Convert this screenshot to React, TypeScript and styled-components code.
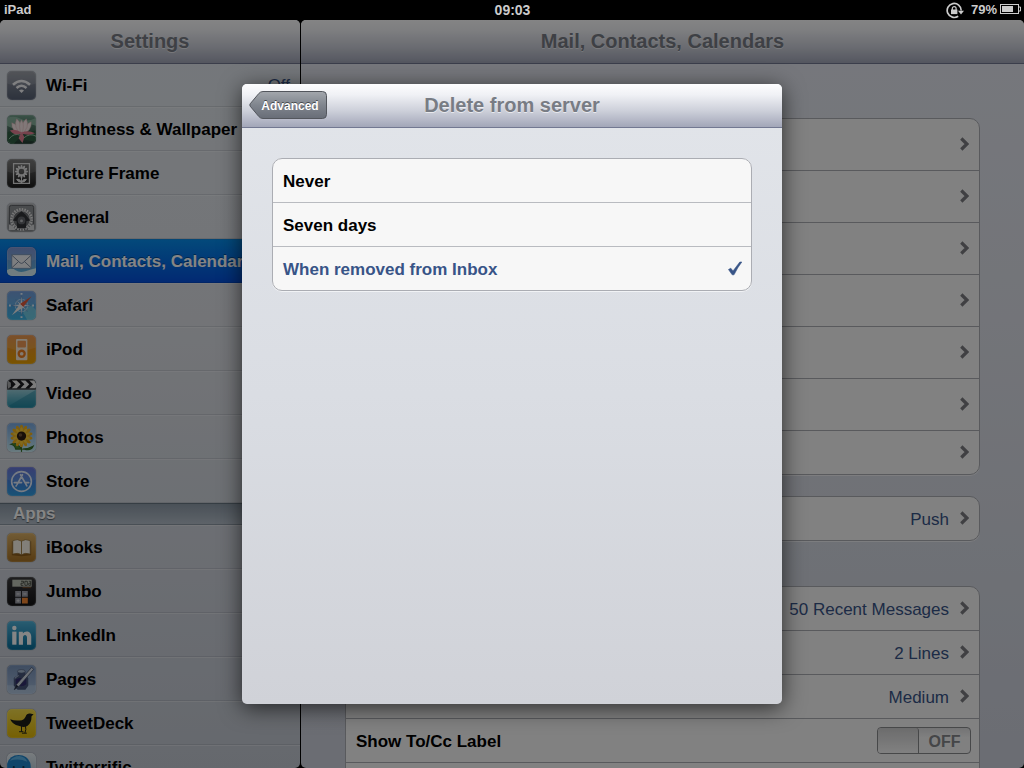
import React, { useState } from "react";
import styled, { createGlobalStyle, css } from "styled-components";

const GlobalStyle = createGlobalStyle`
  *, *::before, *::after { box-sizing: border-box; }
  html, body { margin: 0; padding: 0; background: #000; }
  body { font-family: "Liberation Sans", Arial, sans-serif; font-size: 17px; overflow: hidden; }
  ul { list-style: none; margin: 0; padding: 0; }
  h1, h2, h3 { margin: 0; font-size: 20px; font-weight: bold; }
`;

const Screen = styled.div`
  display: flex;
  flex-direction: column;
  height: 100vh;
  background: #000;
`;

const StatusBar = styled.header`
  flex: none;
  display: grid;
  grid-template-columns: 1fr auto 1fr;
  align-items: center;
  height: 20px;
  padding: 0 3px 0 4px;
  color: #cbcbcb;
  font-size: 14px;
  font-weight: bold;
  line-height: 18px;
`;

const Carrier = styled.span`
  font-size: 13px;
`;

const StatusIcons = styled.div`
  display: flex;
  justify-content: flex-end;
  align-items: center;
  gap: 3px;
  font-size: 13px;

  svg:first-child { margin-right: 4px; }
  svg:last-child { margin-bottom: 2px; }
`;

const Split = styled.div`
  position: relative;
  flex: 1;
  min-height: 0;
  display: grid;
  grid-template-columns: 300px 1fr;
  gap: 1px;
`;

const panel = css`
  display: flex;
  flex-direction: column;
  min-width: 0;
  min-height: 0;
  overflow: hidden;
  border-radius: 5px;
`;

const Sidebar = styled.nav`
  ${panel}
  background: linear-gradient(#e0e6ec, #dcdfe5 40%, #c2c8d2);
`;

const Detail = styled.main`
  ${panel}
  background: linear-gradient(#e3e6ee, #dcdfe8 40%, #cdd1dc);
`;

const TitleBar = styled.div`
  position: relative;
  z-index: 1;
  flex: none;
  display: flex;
  align-items: center;
  justify-content: center;
  height: 44px;
  margin-bottom: -1px;
  padding-bottom: 2px;
  border-bottom: 1px solid #727891;
  background: linear-gradient(#fdfdfe, #f0f1f5 25%, #cdd0da 62%, #a2a6b8);
  color: #787c84;
  text-shadow: 0 1px 0 rgba(255, 255, 255, 0.6);

  h1, h2 { padding-top: 2px; }
`;

const Label = styled.span`
  padding-top: 2px;
`;

const SidebarLink = styled.a<{ $active?: boolean }>`
  display: flex;
  align-items: center;
  gap: 10px;
  height: 44px;
  padding: 0 10px 0 7px;
  border-top: 1px solid ${(p) => (p.$active ? "#0e86dc" : "rgba(255,255,255,.3)")};
  border-bottom: 1px solid ${(p) => (p.$active ? "#0348c4" : "rgba(120,126,136,.22)")};
  background: ${(p) => (p.$active ? "linear-gradient(#068ceb, #0450dc)" : "none")};
  color: ${(p) => (p.$active ? "#fff" : "#000")};
  text-shadow: ${(p) => (p.$active ? "0 -1px 0 rgba(0,0,0,.35)" : "none")};
  font-weight: bold;
  text-decoration: none;
  white-space: nowrap;
`;

const SidebarValue = styled(Label)`
  margin-left: auto;
  color: #385487;
  font-weight: normal;
`;

const IconFrame = styled.svg`
  flex: none;
  width: 29px;
  height: 29px;
  border-radius: 5px;
  box-shadow: 0 0 1px rgba(30, 40, 55, 0.7);
`;

const SectionBar = styled.h2`
  height: 22px;
  padding-left: 13px;
  border-top: 1px solid #687782;
  border-bottom: 1px solid #8d98a3;
  background: linear-gradient(#8e9ba8, #b4bec9);
  color: #fff;
  font-size: 17px;
  line-height: 20px;
  text-shadow: 0 1px 1px rgba(0, 0, 0, 0.5);
`;

const Groups = styled.div`
  flex: 1;
  min-height: 0;
  padding: 55px 44px 0;
`;

const card = css`
  border: 1px solid #abadb3;
  border-radius: 10px;
  background: #f7f7f7;
  box-shadow: 0 1px 0 rgba(255, 255, 255, 0.6);
`;

const Card = styled.ul<{ $gap: number }>`
  ${card}
  margin-bottom: ${(p) => p.$gap}px;
`;

const Row = styled.li<{ $tall?: boolean }>`
  display: flex;
  height: ${(p) => (p.$tall ? 52 : 44)}px;
  border-bottom: 1px solid #abadb3;
  font-weight: bold;

  &:last-child { border-bottom: 0; height: 43px; }
`;

const RowLink = styled.a`
  flex: 1;
  display: flex;
  align-items: center;
  justify-content: flex-end;
  gap: 11px;
  padding: 0 10px;
  color: #385487;
  font-weight: normal;
  text-decoration: none;

  svg { margin-bottom: 2px; }
`;

const SwitchLabel = styled.label`
  flex: 1;
  display: flex;
  align-items: center;
  justify-content: space-between;
  padding: 0 8px 0 10px;
`;

const Switch = styled.span`
  display: grid;
  grid-template-columns: 41px 1fr;
  width: 94px;
  height: 27px;
  border: 1px solid #898a8d;
  border-radius: 4px;
  background: linear-gradient(#dedee0, #f6f6f6 40%);
  color: #85868a;
  font-size: 16px;
  line-height: 27px;
  text-align: center;
  overflow: hidden;
`;

const Knob = styled.input`
  appearance: none;
  margin: 0;
  border-right: 1px solid #898a8d;
  border-radius: 3px;
  background: linear-gradient(#cfcfd0, #fafafa);
`;

const Overlay = styled.div`
  position: absolute;
  z-index: 2;
  inset: 0;
  display: grid;
  place-items: center;
  background: rgba(0, 0, 0, 0.48);
`;

const Dialog = styled.section`
  display: flex;
  flex-direction: column;
  width: 540px;
  max-width: 100%;
  height: 620px;
  max-height: 100%;
  overflow: hidden;
  border-radius: 5px;
  background: linear-gradient(#e2e5ea, #dadde3 50%, #d0d2d8);
  box-shadow: 0 4px 22px rgba(0, 0, 0, 0.65);
`;

const DialogBar = styled(TitleBar)`
  display: grid;
  grid-template-columns: 78px 1fr 78px;
  margin-bottom: 0;
  padding: 0 7px 2px;
  text-align: center;
`;

const BackButton = styled.button`
  position: relative;
  width: 78px;
  height: 28px;
  padding: 2px 0 0 4px;
  border: 0;
  background: none;
  color: #fff;
  font: bold 12px "Liberation Sans", Arial, sans-serif;
  text-shadow: 0 -1px 0 rgba(0, 0, 0, 0.5);

  svg { position: absolute; inset: 0; }
  span { position: relative; }
`;

const Choices = styled.fieldset`
  ${card}
  margin: 30px;
  padding: 0;
  min-width: 0;
`;

const Choice = styled.label<{ $on: boolean }>`
  display: flex;
  align-items: center;
  justify-content: space-between;
  height: 44px;
  padding: 0 8px 0 10px;
  border-bottom: 1px solid #b9bbc0;
  color: ${(p) => (p.$on ? "#385487" : "#000")};
  font-weight: bold;

  &:last-child { border-bottom: 0; height: 43px; }
`;

const HiddenRadio = styled.input`
  position: absolute;
  appearance: none;
  margin: 0;
`;

const Chevron = () => (
  <svg width="9" height="14" viewBox="0 0 9 14" aria-hidden="true">
    <path d="M1.3 1.5 6.9 7 1.3 12.5" fill="none" stroke="#7b7c80" strokeWidth="3.2" />
  </svg>
);

type Art = { top: string; bottom: string; gloss?: boolean; art: React.ReactNode };

const petals = (n: number, y: number, rx: number, ry: number, fill: string, cx = 15, cy = 15) =>
  Array.from({ length: n }, (_, i) => (
    <ellipse key={i} cx={cx} cy={cy - y} rx={rx} ry={ry} fill={fill} transform={`rotate(${(360 / n) * i} ${cx} ${cy})`} />
  ));

const icons: Record<string, Art> = {
  wifi: {
    top: "#90949d", bottom: "#566074", gloss: true,
    art: (
      <g fill="none" stroke="#f4f4f6" strokeWidth="2.6">
        <path d="M6.2 14.2Q15 6.4 23.8 14.2M9.8 17.6Q15 13 20.2 17.6" />
        <path d="M12.4 20.2Q15 18 17.6 20.2L15 22.8Z" fill="#f4f4f6" stroke="none" />
      </g>
    ),
  },
  lotus: {
    top: "#6f9c88", bottom: "#20392f",
    art: (
      <g>
        <path d="M0 3Q8 0 14 4T30 3V11Q22 8 15 12T0 11Z" fill="#91b9a5" opacity=".8" />
        <path d="M0 18 9 15 14 22 7 30H0ZM30 16 20 18 17 25 30 28Z" fill="#2f5d42" />
        <path d="M2 25Q7 18 14 21M17 24Q24 18 30 22" stroke="#9bc6aa" fill="none" />
        <g fill="#f7e7e6" stroke="#dfb2b8" strokeWidth=".5">
          <path d="M15 20Q4 17 5 8Q12 10 15 20ZM15 20Q26 17 25 7Q18 10 15 20Z" />
          <path d="M15 20Q6 13 10 4Q16 9 15 20ZM15 20Q24 13 20 4Q14 9 15 20Z" />
          <path d="M15 20Q11 11 15 5Q19 11 15 20Z" />
        </g>
        <path d="M15 18Q9 14 3 16Q8 22 15 19ZM15 18Q22 15 29 19Q22 22 15 19ZM15 17 18 23 16 29 12 24Z" fill="#e27f92" />
      </g>
    ),
  },
  frame: {
    top: "#6b6b6b", bottom: "#1c1c1c", gloss: true,
    art: (
      <g>
        <path d="M6.8 4.8H23.2V25.2H6.8Z" fill="none" stroke="#dedede" strokeWidth="1.3" />
        {petals(12, 4.8, 1.1, 2, "#e6e6e6", 15, 13)}
        <circle cx="15" cy="13" r="3.8" fill="none" stroke="#e6e6e6" strokeWidth="1.5" />
        <path d="M15 18V25M15 24Q13 20 10 21Q11 24 15 24ZM15 24Q17 20 20 21Q19 24 15 24Z" stroke="#e6e6e6" fill="#e6e6e6" strokeWidth="1" />
      </g>
    ),
  },
  gear: {
    top: "#b6b9bd", bottom: "#85888c",
    art: (
      <g>
        <rect x="2.500" y="2.500" width="25" height="25" rx="2" fill="#8d9094" stroke="#5a5d61" />
        <circle cx="15" cy="17" r="10.600" fill="none" stroke="#e4e4e4" strokeWidth="2.400" strokeDasharray="1.6 1.17" />
        <circle cx="15" cy="17" r="9" fill="#6d7074" stroke="#d6d6d6" strokeWidth="1" />
        <path d="M15 8.500 19 12 24 18 20 19 19.500 26H10.500L10 19 6 18 11 12Z" fill="#303236" />
        <circle cx="15" cy="18" r="4" fill="#64676b" />
        <circle cx="15" cy="18.500" r="1.500" fill="#b9bbbe" />
        <path d="M2 22 6 24 9 28H2ZM28 22 24 24 21 28H28Z" fill="#d4d5d7" />
      </g>
    ),
  },
  mail: {
    top: "#6f86cf", bottom: "#60b8dc", gloss: true,
    art: (
      <g>
        <path d="M0 24Q5 21 9 24T19 25T30 22V30H0Z" fill="#d8f0f6" />
        <rect x="5" y="8" width="20" height="14" fill="#eff2f6" stroke="#718bad" strokeWidth=".8" />
        <path d="M5 8.500 13.500 16.400Q15 17.500 16.500 16.400L25 8.500M5 21.500 12 15M25 21.500 18 15" fill="none" stroke="#75849c" strokeWidth="1" />
      </g>
    ),
  },
  safari: {
    top: "#6290d6", bottom: "#3bb4e4", gloss: true,
    art: (
      <g>
        <path d="M18 18 25 14 30 20V30H21L17 23Z" fill="#8edbe3" opacity=".6" />
        <circle cx="15" cy="15" r="6.500" fill="none" stroke="#c8e2f7" strokeWidth=".8" />
        <path d="M15 5 16.300 12.500 21 9 17.500 13.700 25 15 17.500 16.300 21 21 16.300 17.500 15 25 13.700 17.500 9 21 12.500 16.300 5 15 12.500 13.700 9 9 13.700 12.500Z" fill="#e5f1fb" stroke="#517fb5" strokeWidth=".4" />
        <path d="M25.500 5.500 16.800 16.600 13.400 13.400Z" fill="#e05b3d" />
        <path d="M5 25 16.800 16.600 13.400 13.400Z" fill="#f2f2f2" />
        <path d="M14 2h2v2h-2zM14 26h2v2h-2zM2 14h2v2H2zM26 14h2v2h-2z" fill="#e5f1fb" />
      </g>
    ),
  },
  ipod: {
    top: "#e8893c", bottom: "#e8a000", gloss: true,
    art: (
      <g>
        <rect x="9.300" y="4.200" width="11.800" height="21.800" rx="1" fill="#faecd9" />
        <rect x="10.800" y="6" width="8.800" height="7" rx="1" fill="#ef9a55" />
        <circle cx="15.200" cy="19.400" r="4.300" fill="#ec7e1f" />
        <circle cx="15.200" cy="19.400" r="1.900" fill="#faecd9" />
      </g>
    ),
  },
  video: {
    top: "#def2f6", bottom: "#238fa8",
    art: (
      <g>
        <path d="M0 29 30 11V30H0Z" fill="#1d7e99" opacity=".45" />
        <path d="M0 0H30V11H0Z" fill="#1b1c1f" />
        <path d="M0 10.500H30" stroke="#707479" />
        <path d="m5 1.500 5 0 4 4-4 4H5l4-4ZM14 1.500h5l4 4-4 4h-5l4-4ZM23 1.500h5l2 3v4l-1 1h-6l4-4Z" fill="#ececec" />
        <path d="M0 1 4 4V8L1 10Z" fill="#a9abad" />
      </g>
    ),
  },
  photos: {
    top: "#78a8e1", bottom: "#c7eaf2",
    art: (
      <g>
        <path d="M15 18V30M15 27Q10 19 4 22Q8 23 9 27ZM16 27Q22 27 27 24Q25 29 18 27" stroke="#376b25" strokeWidth="1.200" fill="#4c8a2d" />
        {petals(14, 7.4, 1.8, 4.2, "#f3b31c", 15, 13.5)}
        {petals(10, 6, 1.4, 3.2, "#f9cc3c", 15, 13.5)}
        <circle cx="15" cy="13.500" r="4.800" fill="#2f1d12" />
        <circle cx="14" cy="12.500" r="1.800" fill="#6e5238" />
      </g>
    ),
  },
  store: {
    top: "#5563d3", bottom: "#2e9fe2", gloss: true,
    art: (
      <g fill="none" stroke="#e3ecfb" strokeWidth="1.700" strokeLinecap="round">
        <circle cx="15" cy="15" r="10.200" />
        <path d="M16 8 10.500 18M14 8 20.500 19.500M7.500 16.200H15M18.800 16.200H22.500M9.400 19.600 9.800 19" />
      </g>
    ),
  },
  ibooks: {
    top: "#dab067", bottom: "#a77225",
    art: (
      <g>
        <path d="M5 8.500 15 10.500 25 8.500V23L15 24 5 23Z" fill="#8c5c1b" />
        <path d="M6 8Q11 5.500 15 8.500V22.500Q11 20 6 21.800ZM24 8Q19 5.500 15 8.500V22.500Q19 20 24 21.800Z" fill="#f9f4e8" stroke="#94723a" strokeWidth=".7" />
      </g>
    ),
  },
  jumbo: {
    top: "#3a3a3c", bottom: "#121214",
    art: (
      <g>
        <rect x="5.500" y="2.800" width="20" height="7.200" fill="#bfc4b6" />
        <path d="M14.500 4.400H17V6.400H14.500V8.600H17M18.500 4.400H21V8.600H18.500ZM22.500 4.400H24.500V8.600H22.500V6.400H24.500" fill="none" stroke="#33362f" strokeWidth=".8" />
        <path d="M16 11H25" stroke="#77502c" strokeWidth="1" />
        <path d="M8.500 14.500h6v6h-6zM15.500 14.500h6v6h-6zM8.500 21.500h6v6h-6z" fill="#9c9ea8" />
        <path d="M15.500 21.500h6v6h-6z" fill="#f28733" />
        <path d="M10 17.500h3M17 17.500h3M10 24.500h3M11.500 23v3" stroke="#dadada" />
      </g>
    ),
  },
  linkedin: {
    top: "#4fb2da", bottom: "#066c98",
    art: (
      <g fill="#fff">
        <circle cx="7.600" cy="7.200" r="2.300" />
        <rect x="5.400" y="11" width="4.400" height="13.500" />
        <path d="M12.200 11h4.200v2c2-3.300 8.700-3.400 8.700 3.400v8.100h-4.400v-7.200c0-4-4.200-3.600-4.200 0v7.200h-4.300Z" />
      </g>
    ),
  },
  pages: {
    top: "#7893ba", bottom: "#a5bad7",
    art: (
      <g>
        <path d="M0 21H30V30H0Z" fill="#b8cbe1" opacity=".6" />
        <path d="M11 6.500h8v4l3 3v8l-3 4h-8l-4-4v-8l4-3Z" fill="#46557a" />
        <ellipse cx="14.800" cy="6.500" rx="4" ry="1.800" fill="#a6b8d0" stroke="#53647f" strokeWidth=".7" />
        <path d="M9 15Q14.500 12 20 15V20Q15 24 9 20Z" fill="#332e6e" />
        <path d="M8 14Q11 11 12 11" stroke="#b9c7dc" fill="none" />
        <path d="M25.500 2.500 27.500 4.500 12.500 22 7.500 25.500 9.500 20.500Z" fill="#cfd7e2" stroke="#3b475f" strokeWidth=".7" />
        <path d="m9.500 20.500 2.500 1.500-4.500 3.500Z" fill="#222b42" />
      </g>
    ),
  },
  tweetdeck: {
    top: "#f2da4a", bottom: "#e2b805",
    art: (
      <g>
        <path d="M3.200 10.500Q8 12.500 13 11.800 17.500 12 19.200 8 20.300 4.400 23.800 4.600L27.500 5.400 25.400 7.500Q25.400 15 21 17.500 17 19.600 12 17.400 6 16 3.200 10.500Z" fill="#1c1d18" />
        <path d="M15 17.500V23.500H12.500M15 23.500H17M19 17.500 19.500 21 18.500 25H15.500M18.500 25H20.500" fill="none" stroke="#1c1d18" strokeWidth="1" />
      </g>
    ),
  },
  twitterrific: {
    top: "#e7eef2", bottom: "#9ab8ca",
    art: (
      <g>
        <path d="M0 11Q3 2 12 2T24 10Q26 18 22 30H0Z" fill="#1f84cb" />
        <path d="M3 8Q7 3 13 3.200 19 4 21 9 12 5 3 8Z" fill="#5db4e8" />
        <circle cx="7" cy="14.500" r="1.100" fill="#12344c" />
        <circle cx="17" cy="14.500" r="1.100" fill="#12344c" />
      </g>
    ),
  },
};

const AppIcon = ({ name }: { name: string }) => {
  const { top, bottom, gloss, art } = icons[name];
  return (
    <IconFrame viewBox="0 0 30 30" aria-hidden="true">
      <defs>
        <linearGradient id={`bg-${name}`} x2="0" y2="1">
          <stop stopColor={top} />
          <stop offset="1" stopColor={bottom} />
        </linearGradient>
      </defs>
      <rect width="30" height="30" fill={`url(#bg-${name})`} />
      {gloss && <path d="M0 0H30V13Q15 19 0 13Z" fill="#fff" opacity=".12" />}
      {art}
      <rect x=".5" y=".5" width="29" height="29" rx="5" fill="none" stroke="#fff" opacity=".12" />
    </IconFrame>
  );
};

type Item = { icon: string; label: string; value?: string; active?: boolean };

const settings: Item[] = [
  { icon: "wifi", label: "Wi-Fi", value: "Off" },
  { icon: "lotus", label: "Brightness & Wallpaper" },
  { icon: "frame", label: "Picture Frame" },
  { icon: "gear", label: "General" },
  { icon: "mail", label: "Mail, Contacts, Calendars", active: true },
  { icon: "safari", label: "Safari" },
  { icon: "ipod", label: "iPod" },
  { icon: "video", label: "Video" },
  { icon: "photos", label: "Photos" },
  { icon: "store", label: "Store" },
];

const apps: Item[] = [
  { icon: "ibooks", label: "iBooks" },
  { icon: "jumbo", label: "Jumbo" },
  { icon: "linkedin", label: "LinkedIn" },
  { icon: "pages", label: "Pages" },
  { icon: "tweetdeck", label: "TweetDeck" },
  { icon: "twitterrific", label: "Twitterrific" },
];

const SidebarList = ({ items }: { items: Item[] }) => (
  <ul>
    {items.map((item) => (
      <li key={item.label}>
        <SidebarLink href="#" $active={item.active} aria-current={item.active ? "page" : undefined}>
          <AppIcon name={item.icon} />
          <Label>{item.label}</Label>
          {item.value && <SidebarValue>{item.value}</SidebarValue>}
        </SidebarLink>
      </li>
    ))}
  </ul>
);

const LinkRow = ({ value, tall, name }: { value?: string; tall?: boolean; name?: string }) => (
  <Row $tall={tall}>
    <RowLink href="#" aria-label={name}>
      {value && <Label>{value}</Label>}
      <Chevron />
    </RowLink>
  </Row>
);

const options = ["Never", "Seven days", "When removed from Inbox"];

export default function App() {
  const [selected, setSelected] = useState(options[2]);

  return (
    <Screen>
      <GlobalStyle />
      <StatusBar>
        <Carrier>iPad</Carrier>
        <time>09:03</time>
        <StatusIcons>
          <svg width="18" height="17" viewBox="0 0 18 17" aria-hidden="true">
            <path d="M12.200 14.200A7 7 0 1 1 15.200 8.500" fill="none" stroke="#cbcbcb" strokeWidth="1.700" />
            <path d="M12 8.800H18L15 12.400Z" fill="#cbcbcb" />
            <path d="M5 7.500h6.400v4.600H5Z" fill="#cbcbcb" />
            <path d="M6.300 8V6.500a1.900 1.900 0 0 1 3.800 0V8" fill="none" stroke="#cbcbcb" strokeWidth="1.200" />
          </svg>
          <span>79%</span>
          <svg width="21" height="10" viewBox="0 0 21 10" aria-hidden="true">
            <rect x=".5" y=".5" width="18" height="9" fill="none" stroke="#cbcbcb" strokeWidth="1" />
            <path d="M2 2h11v6H2Z" fill="#cbcbcb" />
            <path d="M18.500 3h2v4h-2" fill="none" stroke="#cbcbcb" />
          </svg>
        </StatusIcons>
      </StatusBar>

      <Split>
        <Sidebar>
          <TitleBar><h1>Settings</h1></TitleBar>
          <SidebarList items={settings} />
          <SectionBar>Apps</SectionBar>
          <SidebarList items={apps} />
        </Sidebar>

        <Detail>
          <TitleBar><h1>Mail, Contacts, Calendars</h1></TitleBar>
          <Groups>
            <Card $gap={21}>
              {[1, 2, 3, 4, 5, 6].map((n) => (
                <LinkRow key={n} tall name={`Account ${n}`} />
              ))}
              <LinkRow name="Add account" />
            </Card>
            <Card $gap={45}>
              <LinkRow value="Push" />
            </Card>
            <Card $gap={0}>
              <LinkRow value="50 Recent Messages" />
              <LinkRow value="2 Lines" />
              <LinkRow value="Medium" />
              <Row>
                <SwitchLabel>
                  <Label>Show To/Cc Label</Label>
                  <Switch>
                    <Knob type="checkbox" role="switch" />
                    OFF
                  </Switch>
                </SwitchLabel>
              </Row>
              <Row />
            </Card>
          </Groups>
        </Detail>

        <Overlay>
          <Dialog role="dialog" aria-labelledby="dialog-title">
            <DialogBar>
              <BackButton type="button">
                <svg width="78" height="28" viewBox="0 0 78 28" aria-hidden="true">
                  <defs>
                    <linearGradient id="back-fill" x2="0" y2="1">
                      <stop stopColor="#a3a7ad" />
                      <stop offset=".5" stopColor="#80858e" />
                      <stop offset="1" stopColor="#686d77" />
                    </linearGradient>
                  </defs>
                  <path
                    d="M14 .5H73.500Q77.500 .5 77.500 4.500V23.500Q77.500 27.500 73.500 27.500H14Q11.500 27.500 9.800 25.500L1.200 15.200Q.4 14 1.200 12.800L9.800 2.500Q11.500 .5 14 .5Z"
                    fill="url(#back-fill)"
                    stroke="#53565d"
                  />
                </svg>
                <span>Advanced</span>
              </BackButton>
              <h2 id="dialog-title">Delete from server</h2>
            </DialogBar>
            <Choices aria-labelledby="dialog-title">
              {options.map((option) => (
                <Choice key={option} $on={option === selected}>
                  <HiddenRadio
                    type="radio"
                    name="delete-from-server"
                    checked={option === selected}
                    onChange={() => setSelected(option)}
                  />
                  <Label>{option}</Label>
                  {option === selected && (
                    <svg width="15" height="15" viewBox="0 0 15 15" aria-hidden="true">
                      <path d="M.5 8.500 2.800 7.200 5 10 11.800 1H13.800Q9.500 6.500 6 13.800H4.200Z" fill="#385487" stroke="#385487" strokeWidth=".6" />
                    </svg>
                  )}
                </Choice>
              ))}
            </Choices>
          </Dialog>
        </Overlay>
      </Split>
    </Screen>
  );
}
